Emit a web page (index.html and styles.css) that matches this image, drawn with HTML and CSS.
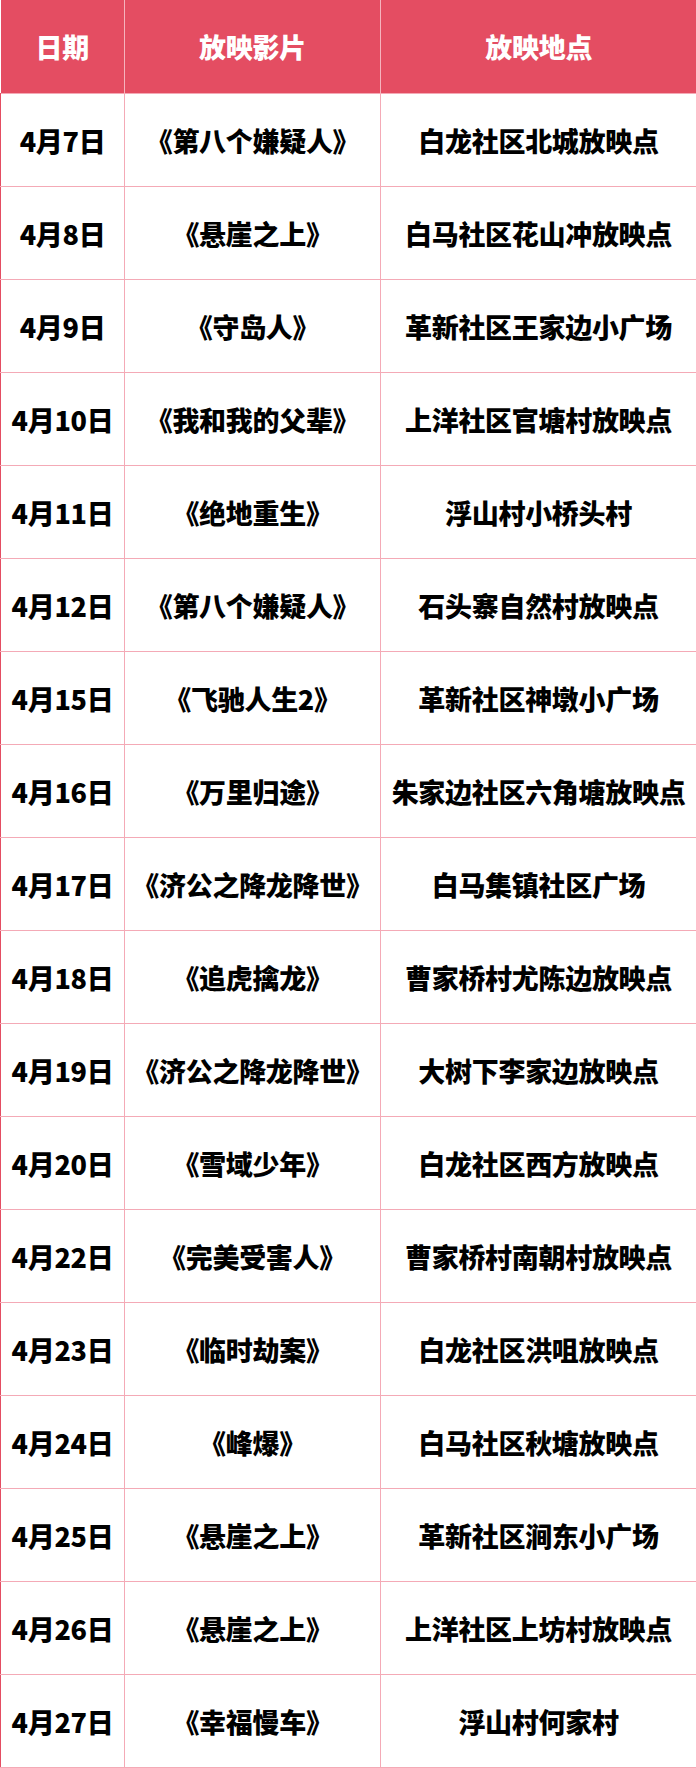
FILE: index.html
```html
<!DOCTYPE html>
<html lang="zh">
<head>
<meta charset="utf-8">
<link rel="stylesheet" href="styles.css">
</head>
<body>
<table class="sched">
<colgroup><col class="c1"><col class="c2"><col class="c3"></colgroup>
<thead>
<tr><th>日期</th><th>放映影片</th><th>放映地点</th></tr>
</thead>
<tbody>
<tr><td>4月7日</td><td>《第八个嫌疑人》</td><td>白龙社区北城放映点</td></tr>
<tr><td>4月8日</td><td>《悬崖之上》</td><td>白马社区花山冲放映点</td></tr>
<tr><td>4月9日</td><td>《守岛人》</td><td>革新社区王家边小广场</td></tr>
<tr><td>4月10日</td><td>《我和我的父辈》</td><td>上洋社区官塘村放映点</td></tr>
<tr><td>4月11日</td><td>《绝地重生》</td><td>浮山村小桥头村</td></tr>
<tr><td>4月12日</td><td>《第八个嫌疑人》</td><td>石头寨自然村放映点</td></tr>
<tr><td>4月15日</td><td>《飞驰人生2》</td><td>革新社区神墩小广场</td></tr>
<tr><td>4月16日</td><td>《万里归途》</td><td>朱家边社区六角塘放映点</td></tr>
<tr><td>4月17日</td><td>《济公之降龙降世》</td><td>白马集镇社区广场</td></tr>
<tr><td>4月18日</td><td>《追虎擒龙》</td><td>曹家桥村尤陈边放映点</td></tr>
<tr><td>4月19日</td><td>《济公之降龙降世》</td><td>大树下李家边放映点</td></tr>
<tr><td>4月20日</td><td>《雪域少年》</td><td>白龙社区西方放映点</td></tr>
<tr><td>4月22日</td><td>《完美受害人》</td><td>曹家桥村南朝村放映点</td></tr>
<tr><td>4月23日</td><td>《临时劫案》</td><td>白龙社区洪咀放映点</td></tr>
<tr><td>4月24日</td><td>《峰爆》</td><td>白马社区秋塘放映点</td></tr>
<tr><td>4月25日</td><td>《悬崖之上》</td><td>革新社区涧东小广场</td></tr>
<tr><td>4月26日</td><td>《悬崖之上》</td><td>上洋社区上坊村放映点</td></tr>
<tr class="last"><td>4月27日</td><td>《幸福慢车》</td><td>浮山村何家村</td></tr>
</tbody>
</table>
</body>
</html>
```

FILE: styles.css
```css
html, body {
  margin: 0;
  padding: 0;
  background: #ffffff;
}
.sched {
  width: 696px;
  border-collapse: collapse;
  table-layout: fixed;
  font-family: "Noto Sans CJK SC", "Noto Sans", sans-serif;
  font-weight: 900;
  font-size: 27px;
  letter-spacing: -0.3px;
}
.c1 { width: 124px; }
.c2 { width: 256px; }
.c3 { width: 316px; }
.sched th {
  background: #e44d62;
  color: #ffffff;
  height: 93px;
  padding: 0;
  font-weight: 900;
  border-left: 1px solid #f5b3bd;
  text-align: center;
  vertical-align: middle;
}
.sched th:first-child { border-left: none; }
.sched td {
  height: 92px;
  padding: 0;
  color: #000000;
  text-align: center;
  vertical-align: middle;
  border: 1px solid #f4aab6;
  white-space: nowrap;
}
.sched td:first-child { border-left: 1px solid #e44d62; }
.sched td:last-child { border-right: 1px solid #e44d62; }
.sched tr.last td:nth-child(3) { border-left: 1px solid #e44d62; }
```
